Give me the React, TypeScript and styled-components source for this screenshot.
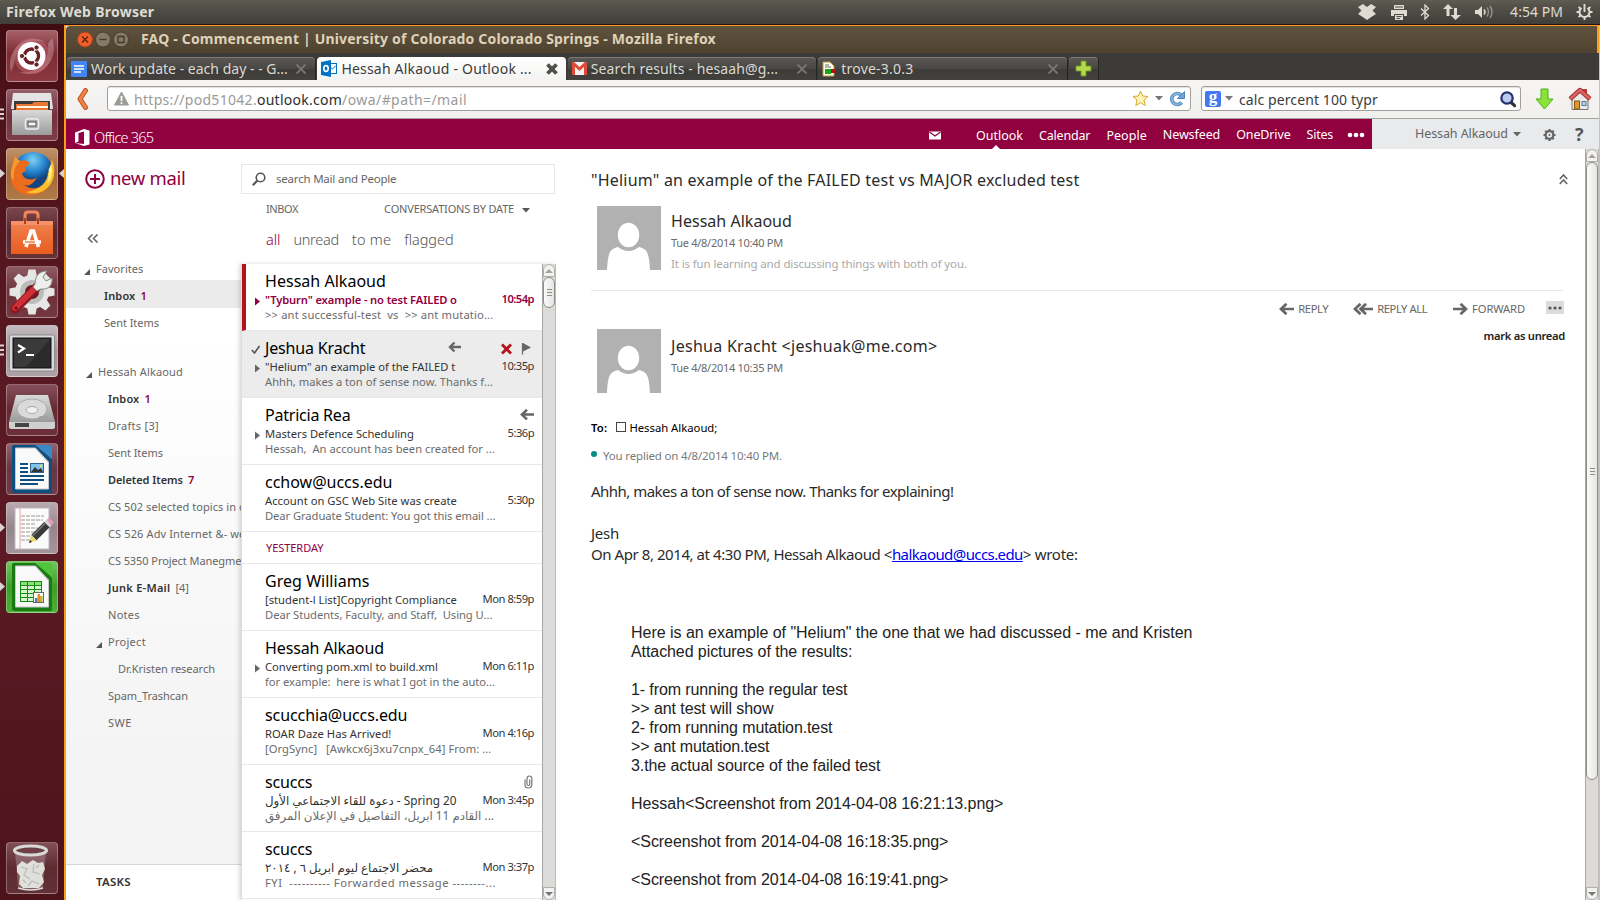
import React, { useLayoutEffect, useRef, useState } from 'react';
import styled, { createGlobalStyle, css } from 'styled-components';

const MAROON = '#91003f';
const UI = `"Noto Sans", "Open Sans", "DejaVu Sans", sans-serif`;

const Global = createGlobalStyle`
  * { box-sizing: border-box; }
  body { margin: 0; width: 1600px; height: 900px; overflow: hidden; font-family: ${UI}; background: #fff; }
  svg { display: block; flex: none; }
`;

/* Text tracked so that it occupies a given width. */
function Fit({ w, children, className }: { w?: number; children: string; className?: string }) {
  const ref = useRef<HTMLSpanElement>(null);
  const [ls, setLs] = useState(0);
  useLayoutEffect(() => {
    if (!w || !ref.current) return;
    const natural = ref.current.getBoundingClientRect().width - ls * children.length;
    setLs((w + 0.4 - natural) / children.length);
  }, [w, children]);
  return <span ref={ref} className={className} style={{ letterSpacing: `${ls}px` }}>{children}</span>;
}
const Text = styled(Fit)`display: inline-block; flex: none; white-space: pre;`;

const Desktop = styled.div`width: 1600px; height: 900px; display: flex; flex-direction: column; overflow: hidden; background: #2e0a1c;`;

/* ---------- top panel ---------- */
const TopPanel = styled.header`
  height: 24px; flex: none; display: flex; align-items: center; padding: 0 7px 0 6px;
  background: linear-gradient(#5f5d53, #55534b 20%, #3f3e39); color: #dfdbd2;
`;
const PanelTitle = styled(Text)`font-size: 14px; font-weight: 700; line-height: 24px; margin-right: auto;`;
const Indicators = styled.div`display: flex; align-items: center; svg { fill: #dfdbd2; }`;
const Clock = styled(Text)`font-size: 14px; line-height: 24px; margin: 0 13px 0 15px;`;

const Body = styled.div`display: flex; height: 876px;`;

/* ---------- launcher ---------- */
const Launcher = styled.nav`
  width: 64px; flex: none; display: flex; flex-direction: column; gap: 7px; padding: 6px 6px;
  background: linear-gradient(#3f0c11, #4d1219 8%, #581822 35%, #5b1a24 60%, #4c131b);
`;
const Tile = styled.div<{ $bg: string; $last?: boolean }>`
  position: relative; width: 52px; height: 52px; flex: none; border-radius: 4px;
  background: ${p => p.$bg}; border: 1px solid rgba(255,255,255,.28);
  ${p => p.$last && css`margin-top: auto;`}
  & > svg { margin: -1px; }
`;
const Pips = styled.svg`position: absolute; left: -6px; top: 18px;`;
const Focus = styled.svg`position: absolute; right: -6px; top: 19px;`;

/* ---------- window ---------- */
const Window = styled.main`
  width: 1536px; margin-top: 1px; border-left: 2px solid #f9a01b; border-top: 1px solid #f9a01b; border-right: 1px solid #f6bd58;
  display: flex; flex-direction: column; background: #fff;
`;
const TitleBar = styled.div`
  height: 27px; flex: none; display: flex; align-items: center; background: linear-gradient(#5f523e, #4f432f);
  padding-left: 11px; border-radius: 4px 0 0 0;
`;
const WinTitle = styled(Text)`font-size: 14px; font-weight: 700; color: #dfd2b9; line-height: 24px; margin: -1px 0 0 10px;`;
const TabStrip = styled.div`height: 27px; flex: none; background: #3c3b37; display: flex; align-items: flex-end; padding-left: 1px; gap: 2px;`;
const Tab = styled.div<{ $on?: boolean }>`
  width: 248.4px; height: 23px; display: flex; align-items: center; padding: 0 8px 0 4px; border-radius: 4px 4px 0 0;
  background: ${p => (p.$on ? 'linear-gradient(#fff,#f4f3f2)' : 'linear-gradient(#5a5955,#484743 50%,#3d3c38 55%,#42413d)')};
  color: ${p => (p.$on ? '#3c3c3c' : '#dcd9d2')};
  box-shadow: ${p => (p.$on ? 'none' : 'inset 0 1px #7a7975, 1px 0 #252420')};
`;
const TabText = styled(Text)`font-size: 14px; line-height: 20px; margin: 0 auto 0 4px;`;
const AddTab = styled(Tab)`width: 29px; padding: 0 6px;`;
const Toolbar = styled.div`
  height: 39px; flex: none; display: flex; align-items: center; padding: 0 8px 1px 11px;
  background: linear-gradient(#f6f5f4, #f1f0ef); border-bottom: 1px solid #a7a5a2;
`;
const Field = styled.div<{ $w: number }>`
  width: ${p => p.$w}px; height: 25px; flex: none; display: flex; align-items: center; padding: 0 4px 0 6px;
  background: #fff; border: 1px solid #a19f9b; border-radius: 3px; box-shadow: inset 0 1px #e4e3e1;
`;
const Url = styled(Text)<{ $dark?: boolean }>`font-size: 14px; margin-top: 2px; color: ${p => (p.$dark ? '#2d2d2d' : '#9a9a98')};`;
const Push = styled.span<{ $w?: number }>`${p => (p.$w ? `width:${p.$w}px;flex:none` : 'flex:1')};`;
const Query = styled(Text)`font-size: 14px; color: #3c3c3c; margin: 2px auto 0 6px;`;
const Google = styled.span`
  width: 16px; height: 16px; margin-left: -3px; background: #4179f2; border-radius: 2px; color: #fff; text-align: center;
  font: 700 17px/11px "Liberation Serif", serif;
`;

/* ---------- Office suite bar ---------- */
const SuiteBar = styled.div`height: 30px; flex: none; display: flex; background: #e9eaec;`;
const Brand = styled.div`width: 1306px; height: 30px; background: ${MAROON}; color: #fff; display: flex; padding: 0 7px 0 9px;`;
const Product = styled(Text)`font-size: 14.5px; font-weight: 300; line-height: 30px; margin: 3px 0 0 4px;`;
const AppLink = styled(Text)<{ $up?: boolean }>`
  font-size: 12.5px; line-height: 28px; margin: ${p => (p.$up ? 2 : 3)}px 0 0 16px; height: 27px;
`;
const AppLinkCurrent = styled(Text)`font-size: 12.5px; line-height: 28px; height: 28px;`;
const Current = styled.div`
  display: flex; flex-direction: column; align-items: center; margin-left: 18px; height: 30px; padding-top: 3px;
  svg { margin: -5px 8px 0 0; }
`;
const Account = styled.div`flex: 1; display: flex; align-items: flex-start; padding: 0 11px 0 43px; color: #666;`;
const AccountName = styled(Text)`font-size: 12.5px; line-height: 26px; margin-top: 2px;`;
const Help = styled(Text)`font: 700 18px/30px "Open Sans", sans-serif; color: #555; margin: 0 0 0 19px;`;

const Content = styled.div`display: flex; height: 751px;`;

/* ---------- folders ---------- */
const Folders = styled.aside`
  width: 175px; flex: none; height: 751px; display: flex; flex-direction: column; overflow: hidden;
  background: linear-gradient(#fff 25%, #f3f3f3 85%);
`;
const NewMail = styled.div`display: flex; align-items: center; height: 30px; margin: 15px 0 0 19px; color: ${MAROON};`;
const NewMailText = styled(Text)`font-size: 18.5px; line-height: 30px; margin: -3px 0 0 5px;`;
const Collapse = styled.div`height: 61px; flex: none; padding: 40px 0 0 21px;`;
const Gap = styled.div`height: 22px; flex: none;`;
const Folder = styled.div<{ $x: number; $on?: boolean; $strong?: boolean }>`
  height: ${p => (p.$on ? 28 : 27)}px; flex: none; display: flex; align-items: center; white-space: nowrap;
  padding: ${p => (p.$on ? 2 : 0)}px 0 0 ${p => p.$x}px; font-size: 11px; color: #666;
  ${p => p.$on && css`background: #ebebeb; margin: -2px 0 1px;`}
  ${p => p.$strong && css`& > span:first-of-type { font-weight: 600; color: #333; }`}
  svg { margin: 7px 6px 0 0; }
`;
const Count = styled.span<{ $hot?: boolean }>`margin-left: 5px; ${p => p.$hot && css`color: ${MAROON}; font-weight: 600;`}`;
const Tasks = styled.div`
  height: 36px; margin-top: auto; border-top: 1px solid #d6d6d6; background: #fff; padding: 6px 0 0 30px;
  font-size: 11.5px; font-weight: 600; color: #333; line-height: 22px;
`;

/* ---------- message list ---------- */
const ListPane = styled.section`width: 314px; flex: none; height: 751px; display: flex; flex-direction: column; padding-top: 15px;`;
const Search = styled.div`height: 30px; border: 1px solid #e6e6e6; display: flex; align-items: center; padding-left: 10px; flex: none;`;
const SearchText = styled(Text)`font-size: 11.5px; color: #666; margin: -1px 0 0 10px;`;
const ListHead = styled.div`
  height: 20px; margin-top: 4px; padding: 0 25px 0 25px; display: flex; align-items: center; font-size: 11px; color: #666; flex: none;
  svg { margin-top: 5px; }
`;
const Filters = styled.div`height: 24px; margin-top: 10px; padding-left: 25px; display: flex; gap: 13px; font-size: 14.5px; line-height: 22px; flex: none;`;
const Filter = styled(Text)<{ $on?: boolean }>`color: ${p => (p.$on ? MAROON : '#555')}; font-weight: 300;`;
const ListBody = styled.div`display: flex; margin-top: 12px; height: 636px; box-shadow: -2px 0 4px rgba(0,0,0,.14);`;
const Items = styled.div`width: 301px; flex: none; height: 636px; overflow: hidden; background: #fff; border-left: 1px solid #dcdcdc;`;
const Item = styled.article<{ $sel?: boolean; $unread?: boolean }>`
  height: 67px; border-bottom: 1px solid #e8e8e8; padding: 6px 8px 0 0; display: grid; align-content: start;
  grid-template-columns: 23px 192px 77px; grid-template-rows: 21px 16px 15px; justify-items: start;
  background: ${p => (p.$sel ? '#ececec' : '#fff')};
  ${p => p.$unread && css`border-left: 4px solid #b5121b; grid-template-columns: 19px 192px 77px;`}
`;
const Sender = styled(Text)`font-size: 16px; line-height: 22px; color: #000;`;
const Subject = styled(Text)<{ $unread?: boolean }>`
  font-size: 11.2px; line-height: 17px; color: #333;
  ${p => p.$unread && css`color: ${MAROON}; font-weight: 600;`}
`;
const Preview = styled(Text)`font-size: 11.2px; line-height: 15px; color: #6b6b6b; grid-column: 2 / 4;`;
const Time = styled(Subject)`justify-self: end; margin-top: -1px;`;
const Gutter = styled.div`width: 100%; display: flex; justify-content: flex-end; align-items: center; padding: 4px 5px 0 0;`;
const Flags = styled.div`width: 77px; display: flex; justify-content: flex-end; align-items: center;`;
const Day = styled.div`height: 32px; border-bottom: 1px solid #e8e8e8; padding-left: 24px; font-size: 11px; line-height: 31px; color: ${MAROON};`;

/* ---------- scroll bars ---------- */
const Bar = styled.div`
  width: 14px; flex: none; height: 100%; display: flex; flex-direction: column; background: #dcdbd9;
  border-left: 1px solid #a9a7a4; border-right: 1px solid #bdbbb8;
`;
const Cap = styled.div<{ $down?: boolean }>`
  height: 13px; flex: none; display: flex; align-items: center; justify-content: center; background: #f3f2f1; border: 1px solid #b0aeab;
  border-radius: ${p => (p.$down ? '0 0 7px 7px' : '7px 7px 0 0')};
`;
const Thumb = styled.div<{ $h: number }>`
  height: ${p => p.$h}px; flex: none; border: 1px solid #8f8d8a; border-radius: 7px; background: linear-gradient(90deg, #fafafa, #e6e5e3);
  display: flex; flex-direction: column; justify-content: center; align-items: center; gap: 2px;
`;
const Grip = styled.i`width: 5px; height: 1px; background: #8f8d8a;`;

function Scroll({ h }: { h: number }) {
  return (
    <Bar>
      <Cap><svg width="8" height="4"><path d="M0 4L4 0L8 4z" fill="#a5a3a0" /></svg></Cap>
      <Thumb $h={h}><Grip /><Grip /><Grip /></Thumb>
      <Push />
      <Cap $down><svg width="8" height="4"><path d="M0 0L4 4L8 0z" fill="#777" /></svg></Cap>
    </Bar>
  );
}

/* ---------- reading pane ---------- */
const Reader = styled.section`flex: 1; height: 751px; padding: 16px 20px 0 36px; overflow: hidden; color: #2b2b2b;`;
const Row = styled.div<{ $mt?: number; $h?: number }>`display: flex; align-items: flex-start; margin-top: ${p => p.$mt || 0}px; ${p => p.$h && `height:${p.$h}px;`}`;
const CollapseAll = styled.svg`margin-right: -3px;`;
const Headline = styled(Text)`font-size: 16px; line-height: 30px;`;
const Who = styled.div<{ $mt: number }>`margin: ${p => p.$mt}px auto 0 10px; display: flex; flex-direction: column; align-items: flex-start;`;
const Name = styled(Text)`font-size: 16px; line-height: 22px;`;
const When = styled(Text)<{ $pale?: boolean }>`font-size: ${p => (p.$pale ? 11.5 : 11)}px; line-height: 20px; margin-top: 1px; color: ${p => (p.$pale ? '#a9a9a9' : '#6a6a6a')};`;
const Rule = styled.hr`border: 0; height: 1px; background: #e6e6e6; margin: 20px 2px 0 0;`;
const Actions = styled.div`display: flex; justify-content: flex-end; align-items: center; margin-top: 8px; height: 20px; color: #666; padding-right: 1px;`;
const Action = styled(Text)<{ $gap: number }>`font-size: 11.2px; margin: -1px ${p => p.$gap}px 0 4px;`;
const More = styled.div`width: 18px; height: 13px; background: #dcdcdc; display: flex; align-items: center; justify-content: center; margin-top: -3px;`;
const MarkUnread = styled(Text)`font-size: 11.2px; font-weight: 600; line-height: 20px; color: #222;`;
const Lower = styled.div`margin-top: 3px;`;
const To = styled.div`display: flex; align-items: center; height: 20px; margin-top: 24px; font-size: 11.3px; color: #000; b { font-weight: 600; }`;
const Box = styled.i`width: 10px; height: 10px; border: 1px solid #444; margin: 0 3px 0 9px;`;
const Replied = styled.div`display: flex; align-items: center; height: 20px; margin-top: 8px; font-size: 11.5px; color: #7a7a7a;`;
const Dot = styled.i`width: 6px; height: 6px; border-radius: 3px; background: #008f85; margin: -2px 6px 0 0;`;
const Message = styled.div`margin-top: 16px; font-size: 15px; line-height: 21px;`;
const Line = styled.div`height: 21px; display: flex;`;
const Link = styled(Text)`text-decoration: underline; color: #00e;`;
const Quote = styled.div`margin: 58px 0 0 40px; font: 16px/19px "Liberation Sans", Arial, sans-serif; color: #222;`;
const QLine = styled.div`height: 19px;`;

/* ---------- small drawings ---------- */
const Caret = ({ c = '#666' }: { c?: string }) => <svg width="8" height="5"><path d="M0 0H8L4 4.5z" fill={c} /></svg>;
const Tri = () => <svg width="6" height="6"><path d="M6 0V6H0z" fill="#555" /></svg>;
const Arrow = ({ w = 14, flip }: { w?: number; flip?: boolean }) => (
  <svg width={w} height={w * 0.8} viewBox="0 0 15 12" fill="none" stroke="#666" strokeWidth="2.7"
    transform={flip ? 'scale(-1 1)' : undefined}><path d="M2 6H15M7.500 .8L2 6L7.500 11.200" /></svg>
);
const ArrowAll = () => (
  <svg width="20" height="12" viewBox="0 0 20 12" fill="none" stroke="#666" strokeWidth="2.7"><path d="M7 6H20M7.500 .8L2 6L7.500 11.200M13 .8L7.500 6L13 11.200" /></svg>
);
const Expand = ({ c = '#666' }: { c?: string }) => <svg width="5" height="9"><path d="M0 .5L5 4.5L0 8.500z" fill={c} /></svg>;
const Close = ({ on }: { on?: boolean }) => (
  <svg width="12" height="12" viewBox="0 0 12 12"><path d="M1.500 1.500L10.500 10.500M10.500 1.500L1.500 10.500" stroke={on ? '#4f4e4a' : '#777571'} strokeWidth={on ? 3.8 : 1.8} /></svg>
);
const Avatar = () => (
  <svg width="64" height="64">
    <rect width="64" height="64" fill="#b1b1b1" />
    <path d="M10 64C11 48 12 43 21 41Q31.500 49 42 41C51 43 52 48 53 64z" fill="#fff" />
    <ellipse cx="31.500" cy="29" rx="11.500" ry="13" fill="#fff" stroke="#b1b1b1" strokeWidth="1.500" />
  </svg>
);
const WinButton = ({ kind }: { kind: 'x' | '-' | 'o' }) => (
  <svg width="18" height="18" viewBox="0 0 18 18">
    <circle cx="8" cy="8.500" r="7.500" fill={kind === 'x' ? '#ee5f2c' : '#837a68'} stroke={kind === 'x' ? '#a8401a' : '#463d2c'} />
    <path fill="none" stroke={kind === 'x' ? '#5c1f0a' : '#3f3829'} strokeWidth="1.300"
      d={kind === 'x' ? 'M5 5.500L11 11.500M11 5.500L5 11.500' : kind === '-' ? 'M4.500 8.500H11.500' : 'M5 5.500H11V11.500H5z'} />
  </svg>
);

const Sheet = ({ a, b }: { a: string; b: string }) => (
  <>
    <path d="M8 2H32L46 17V48Q46 50 43 50H9Q6 50 6 47V4Q6 2 8 2z" fill={a} />
    <path d="M29 2H43Q46 2 46 5V16z" fill={b} />
    <path d="M9.500 5H29.500L42.500 19V46H9.500z" fill="#fafafa" stroke="#c9c9c9" />
    <path d="M29.500 5V6L42.500 20V19z" fill="#bbb" />
  </>
);

const icons: Record<string, React.ReactNode> = {
  dash: (
    <>
      <path d="M5 42C-1 18 22 2 40 12C26 8 10 14 8 34zM46 8C54 32 34 50 12 42C30 44 44 34 42 14z" fill="#fff" opacity=".25" />
      <circle cx="26" cy="26" r="18" fill="#c66b74" opacity=".45" />
      <circle cx="25.500" cy="26" r="14" fill="#fff" />
      <circle cx="25.500" cy="26" r="7" fill="none" stroke="#6b2027" strokeWidth="3.400" />
      <path d="M25.500 26L12 26M25.500 26L32 37.500M25.500 26L32 14.500" stroke="#fff" strokeWidth="1.300" />
      <circle cx="25.500" cy="26" r="5" fill="#fff" />
      <g fill="#6b2027" stroke="#fff" strokeWidth="1"><circle cx="16" cy="26" r="2.600" /><circle cx="30.500" cy="17.500" r="2.600" /><circle cx="30.500" cy="34.500" r="2.600" /></g>
    </>
  ),
  files: (
    <>
      <path d="M7 4H45L47 20H5z" fill="#e4e4e4" /><rect x="8" y="12" width="36" height="10" fill="#3b3b3b" />
      <path d="M10 15H26L28 13H42V24H10z" fill="#e97733" /><rect x="11" y="17" width="31" height="2" fill="#fff3e4" />
      <path d="M6 21H46V46H6z" fill="url(#gm)" /><rect x="19.500" y="30" width="13" height="10" rx="2" fill="#aaa" stroke="#eee" strokeWidth="1.500" />
      <rect x="22" y="33" width="8" height="4" fill="#f5f5f5" stroke="#555" />
    </>
  ),
  firefox: (
    <>
      <circle cx="27" cy="24" r="20" fill="url(#gb)" />
      <path d="M47 14C51 32 42 47 25 47C10 47 3 36 5 24C6 17 8 14 9 8C11 11 13 12 14 13C18 11 22 13 24 15L19 20C21 22 19 24 16 25C17 31 24 33 31 30C25 38 22 39 17 36C26 44 40 40 43 28C44 22 45 18 47 14z" fill="#ea6c1c" />
      <path d="M46 12C50 22 49 34 40 41C32 47 24 46 20 44C34 42 42 34 42 24L44 26C45 22 44 18 46 12z" fill="#fbc12d" />
      <path d="M45 16C47 24 46 30 41 36C43 30 43 26 42.500 22z" fill="#fff08a" />
      <path d="M5 24C6 17 8 14 9 8C11 11 13 12 14 13L11 17C8 20 7 26 8 33C5 30 4.500 27 5 24z" fill="#f79b2e" />
    </>
  ),
  software: (
    <>
      <path d="M19 14V8Q19 5 22 5H29Q32 5 32 8V14" fill="none" stroke="#f08a5b" strokeWidth="3" />
      <path d="M5 14H47V47H5z" fill="url(#go)" /><path d="M5 14H47V18H5z" fill="#f3916a" />
      <path d="M19 11V17M32 11V17" stroke="#a8431e" strokeWidth="2" />
      <path d="M20 40L25 24H27.500L32.500 40" fill="none" stroke="#fff" strokeWidth="3.600" /><path d="M17 35H35" stroke="#fff" strokeWidth="3.500" /><path d="M19 35H29" stroke="#ee6a31" strokeWidth="1.300" />
    </>
  ),
  settings: (
    <>
      <g fill="#e6e6e4"><circle cx="26" cy="26" r="17" />
        {[0, 45, 90, 135, 180, 225, 270, 315].map(a => <path key={a} d="M21 11L22.500 3.500H29.500L31 11z" transform={`rotate(${a} 26 26)`} />)}
      </g>
      <circle cx="26" cy="26" r="12" fill="#bcbcba" /><circle cx="26" cy="26" r="7" fill="#631b22" />
      <path d="M9 43L31 21" stroke="#8d1620" strokeWidth="9" strokeLinecap="round" /><path d="M9 42L30 21" stroke="#cf2f36" strokeWidth="6" strokeLinecap="round" />
      <path d="M29 18C29 10 33 5 41 5L37 11L40 15L46 12C47 20 41 24 35 23L31 25L27 21z" fill="#eee" stroke="#888" />
      <circle cx="10" cy="42" r="1.500" fill="#5b1016" />
    </>
  ),
  terminal: (
    <>
      <rect x="3.500" y="10" width="45" height="36" rx="2" fill="#dadada" stroke="#8d8d8d" /><rect x="7" y="13" width="38" height="30" fill="#2b2b2b" stroke="#111" />
      <path d="M8 14H44L20 42H8z" fill="#444" opacity=".6" />
      <path d="M12 20L18 23.500L12 27.500" fill="none" stroke="#fff" strokeWidth="2.200" /><path d="M20 30H28" stroke="#fff" strokeWidth="2" />
    </>
  ),
  disk: (
    <>
      <path d="M10 11H42L49 38H3z" fill="url(#gm)" /><path d="M3 38H49V43Q49 45 46 45H6Q3 45 3 43z" fill="#cfcfcf" />
      <rect x="9" y="39" width="14" height="4" fill="#444" /><ellipse cx="26" cy="25" rx="15" ry="10" fill="#dadada" stroke="#a9a9a9" />
      <ellipse cx="26" cy="26" rx="6" ry="3.500" fill="#efefef" stroke="#aaa" /><path d="M33 33L42 33" stroke="#999" />
    </>
  ),
  writer: (
    <>
      <Sheet a="#0d4f80" b="#3a88c4" />
      <path d="M14 21H22M14 25H22M14 29H22M14 33H38M14 37H38M14 41H32" stroke="#0d4f80" strokeWidth="1.800" />
      <rect x="24.500" y="20.500" width="13" height="9" fill="#7ec3ef" stroke="#36618a" /><path d="M25 29L29 24L32 27L35 25L37 29z" fill="#333" /><circle cx="35" cy="23" r="1.200" fill="#ffd83b" />
    </>
  ),
  gedit: (
    <>
      <rect x="9" y="6" width="34" height="41" fill="#fbfbfb" stroke="#bbb" /><path d="M14 6V47" stroke="#f3a3a3" />
      <path d="M15 14H38M15 18H37M15 22H30M15 26H32M15 30H29M15 34H27M15 38H24" stroke="#9a9a9a" strokeWidth="1.200" strokeDasharray="4 1" />
      <path d="M23 41L25 33L31 38.500z" fill="#ead873" /><path d="M23 41L24 38L26 40z" fill="#222" />
      <path d="M28 35.500L41 22.500" stroke="#3a3a3a" strokeWidth="7.500" /><path d="M26.500 34L39.500 21" stroke="#777" strokeWidth="1.500" />
      <path d="M41 22.500L43 20.500" stroke="#d5d5d5" strokeWidth="7.500" /><path d="M43 20.500L45.500 18" stroke="#e79abf" strokeWidth="7" />
    </>
  ),
  calc: (
    <>
      <Sheet a="#1a7a12" b="#4fc43c" />
      <rect x="14" y="20" width="22" height="21" fill="#178a12" />
      {[21, 25, 29, 33, 37].map(y => [15, 22, 29].map(x => <rect key={`${x}-${y}`} x={x} y={y} width="6" height="3" fill={y === 21 ? '#8be07c' : '#d8f5d2'} />))}
      <rect x="27.500" y="31.500" width="10" height="10" fill="#fff" stroke="#666" /><path d="M29 41V37H31.500V41z" fill="#3a7fc4" /><path d="M31.500 41V33H34V41z" fill="#f08a24" /><path d="M34 41V35H36.500V41z" fill="#c9b52d" />
    </>
  ),
  trash: (
    <>
      <path d="M9 9L12 46Q26 50 37 46L40 9z" fill="#fff" opacity=".22" />
      <ellipse cx="24.500" cy="8.500" rx="16" ry="4.500" fill="#6b3f44" stroke="#d9d9d6" strokeWidth="3" />
      <path d="M11 24L16 19L21 22L27 18L32 21L37 20L39 27L36 33L38 40L33 46H17L13 42L14 34L11 30z" fill="#dfdfdc" />
      <path d="M15 25L21 27L18 33L24 37M28 22L27 30L34 32M22 44L26 39L33 42M33 23L30 26M17 38L20 41" stroke="#bcbcb8" fill="none" strokeWidth="1.300" />
      <path d="M12 46Q25 50 37 46" stroke="#ddd" fill="none" strokeWidth="1.500" />
    </>
  ),
};

const launcher: [string, string, number][] = [
  ['dash', 'linear-gradient(#a56168,#7e2b33 45%,#8c3840)', 0],
  ['files', 'linear-gradient(#955e69,#73303c 50%,#7d3d49)', 3],
  ['firefox', 'linear-gradient(#bf9168,#a3683a 50%,#b07a48)', 1],
  ['software', 'linear-gradient(#7a474e,#5a252c 50%,#653238)', 0],
  ['settings', 'linear-gradient(#8d5a62,#6d3039 50%,#733841)', 0],
  ['terminal', 'linear-gradient(#c3bbbf,#9f9599 50%,#aca2a6)', 3],
  ['disk', 'linear-gradient(#85505a,#662831 50%,#6d313b)', 0],
  ['writer', 'linear-gradient(#8d6570,#693542 50%,#6f3c48)', 0],
  ['gedit', 'linear-gradient(#b9a8ad,#96868b 50%,#a3959a)', 1],
  ['calc', 'linear-gradient(#74c45c,#3ea02c 50%,#4bb037)', 1],
];

const Defs = () => (
  <svg width="0" height="0">
    <defs>
      <linearGradient id="gm" x2="0" y2="1"><stop stopColor="#d9d9d9" /><stop offset="1" stopColor="#9b9b9b" /></linearGradient>
      <linearGradient id="go" x2="0" y2="1"><stop stopColor="#f0824f" /><stop offset="1" stopColor="#ea5c1f" /></linearGradient>
      <radialGradient id="gb" cy=".2"><stop stopColor="#7fd0f5" /><stop offset=".6" stopColor="#2584cf" /><stop offset="1" stopColor="#12457f" /></radialGradient>
    </defs>
  </svg>
);

type Mail = { name: string; nw: number; sub: string; sw?: number; pre: string; pw?: number; t: string; tw: number; more?: boolean; unread?: boolean; sel?: boolean; icon?: 'reply' | 'clip' };
const today: Mail[] = [
  { name: 'Hessah Alkaoud', nw: 120.5, sub: '"Tyburn" example - no test FAILED o', sw: 191.5, pre: '>> ant successful-test  vs  >> ant mutatio...', pw: 228, t: '10:54p', tw: 32, more: true, unread: true },
  { name: 'Jeshua Kracht', nw: 100, sub: '"Helium" an example of the FAILED t', sw: 190, pre: 'Ahhh, makes a ton of sense now. Thanks f...', pw: 227.5, t: '10:35p', tw: 32, more: true, sel: true },
  { name: 'Patricia Rea', nw: 85, sub: 'Masters Defence Scheduling', sw: 148.5, pre: 'Hessah,  An account has been created for ...', pw: 229.5, t: '5:36p', tw: 26, more: true, icon: 'reply' },
  { name: 'cchow@uccs.edu', nw: 127, sub: 'Account on GSC Web Site was create', sw: 191.5, pre: 'Dear Graduate Student: You got this email ...', pw: 230, t: '5:30p', tw: 26 },
];
const yesterday: Mail[] = [
  { name: 'Greg Williams', nw: 104, sub: '[student-l List]Copyright Compliance', sw: 191.5, pre: 'Dear Students, Faculty, and Staff,  Using U...', pw: 227, t: 'Mon 8:59p', tw: 51 },
  { name: 'Hessah Alkaoud', nw: 118.5, sub: 'Converting pom.xml to build.xml', sw: 172.5, pre: 'for example:  here is what I got in the auto...', pw: 229.5, t: 'Mon 6:11p', tw: 51, more: true },
  { name: 'scucchia@uccs.edu', nw: 142, sub: 'ROAR Daze Has Arrived!', sw: 126, pre: '[OrgSync]   [Awkcx6j3xu7cnpx_64] From: ...', pw: 226, t: 'Mon 4:16p', tw: 51 },
  { name: 'scuccs', nw: 47, sub: 'دعوة للقاء الاجتماعي الأول - Spring 20', pre: 'القادم 11 ابريل، التفاصيل في الإعلان المرفق ...', t: 'Mon 3:45p', tw: 51, icon: 'clip' },
  { name: 'scuccs', nw: 47, sub: 'محضر الاجتماع ليوم ابريل ٦ , ٢٠١٤', pre: 'FYI  ---------- Forwarded message --------...', pw: 230.5, t: 'Mon 3:37p', tw: 51 },
];
const Arabic = styled(Subject)`font-size: 11.8px;`;
const ArabicPreview = styled(Preview)`font-size: 11.8px;`;

function MailItem({ m }: { m: Mail }) {
  const Sub = m.sw ? Subject : Arabic;
  const Pre = m.pw ? Preview : ArabicPreview;
  return (
    <Item $sel={m.sel} $unread={m.unread}>
      <Gutter>{m.sel && <svg width="9" height="9"><path d="M.8 5L3.500 8L8.500 1" fill="none" stroke="#555" strokeWidth="1.600" /></svg>}</Gutter>
      <Sender w={m.nw}>{m.name}</Sender>
      <Flags>
        {m.icon === 'reply' && <Arrow w={14} />}
        {m.icon === 'clip' && <svg width="11" height="14" viewBox="0 0 11 14"><path d="M2 4.500V10Q2 13 5.300 13T8.800 10V3.500Q8.800 1 6.400 1T4 3.500V9Q4 10.500 5.400 10.500T6.700 9V4.500" fill="none" stroke="#777" strokeWidth="1.200" /></svg>}
        {m.sel && (
          <svg width="86" height="14" viewBox="0 0 86 14">
            <g fill="none" stroke="#666" strokeWidth="2.400"><path d="M2 6H13M6.500 1.500L2 6L6.500 10.500" /></g>
            <path d="M54 3.500L63 12.500M63 3.500L54 12.500" stroke="#b5121b" strokeWidth="2.800" /><path d="M74.500 2V13.500" stroke="#666" strokeWidth="1.200" /><path d="M75 2L83 6.500L75 10.500z" fill="#666" />
          </svg>
        )}
      </Flags>
      <Gutter>{m.more && <Expand c={m.unread ? MAROON : '#666'} />}</Gutter>
      <Sub w={m.sw} $unread={m.unread}>{m.sub}</Sub>
      <Time w={m.tw} $unread={m.unread}>{m.t}</Time>
      <span />
      <Pre w={m.pw}>{m.pre}</Pre>
    </Item>
  );
}

export default function App() {
  return (
    <Desktop>
      <Global />
      <TopPanel>
        <PanelTitle w={148}>Firefox Web Browser</PanelTitle>
        <Indicators>
          <svg width="18" height="16" viewBox="0 0 18 16"><path d="M5 0L9 3L13 0L18 3L14.500 6.500L18 10L14 12.500L9 16L4 12.500L0 10L3.500 6.500L0 3z" /></svg>
          <Push $w={15} />
          <svg width="16" height="15" viewBox="0 0 16 15"><path d="M3 0H13V4H3zM0 5H16V11H13V9H3V11H0zM4 10H12V15H4z" /><path d="M5.500 11.500H10.500M5.500 13.500H9M4 2H12" stroke="#4b4a44" /></svg>
          <Push $w={13} />
          <svg width="10" height="16" viewBox="0 0 10 16"><path d="M1 4.500L8.500 11.500L5 15V1L8.500 4.500L1 11.500" fill="none" stroke="#dfdbd2" strokeWidth="1.300" /></svg>
          <Push $w={13} />
          <svg width="18" height="16" viewBox="0 0 18 16"><path d="M5 0L10 5H6.500V12H3.500V5H0zM12.500 16L7.500 11H11V4H14V11H18z" /></svg>
          <Push $w={14} />
          <svg width="20" height="14" viewBox="0 0 20 14"><path d="M0 5H3L7 1V13L3 9H0z" /><path d="M9 4.500Q11 7 9 9.500" fill="none" stroke="#dfdbd2" strokeWidth="1.500" /><path d="M12 2.500Q15 7 12 11.500M15 1Q19 7 15 13" fill="none" stroke="#96938b" strokeWidth="1.400" /></svg>
          <Clock w={52.5}>4:54 PM</Clock>
          <svg width="17" height="16" viewBox="0 0 16 16"><g fill="none" stroke="#dfdbd2"><path d="M5 4A5 5 0 1 0 11 4" strokeWidth="2" /><path d="M8 0V8M0 8H3M13 8H16M8 13V16M2 13L4 11.500M14 13L12 11.500M2 3L4 4.500M14 3L12 4.500" strokeWidth="1.900" /></g></svg>
        </Indicators>
      </TopPanel>
      <Body>
        <Launcher>
          {launcher.map(([name, bg, pips]) => (
            <Tile key={name} $bg={bg}>
              <svg width="52" height="52">{icons[name]}</svg>
              {pips > 0 && (
                <Pips width="6" height="14">
                  {pips === 1 ? <path d="M0 3L5 7.500L0 12z" fill="#d9d4d2" /> : <path d="M0 2.500H4M0 7H4M0 11.500H4" stroke="#d9d4d2" strokeWidth="2.200" />}
                </Pips>
              )}
              {name === 'firefox' && <Focus width="6" height="12"><path d="M6 2L1 6.500L6 11z" fill="#d9d4d2" /></Focus>}
            </Tile>
          ))}
          <Tile $bg="linear-gradient(#7f5056,#5d2a30 50%,#623137)" $last><svg width="52" height="52">{icons.trash}</svg></Tile>
        </Launcher>
        <Window>
          <TitleBar>
            <WinButton kind="x" /><WinButton kind="-" /><WinButton kind="o" />
            <WinTitle w={574.5}>FAQ - Commencement | University of Colorado Colorado Springs - Mozilla Firefox</WinTitle>
            <Push /><svg width="2" height="27"><rect width="2" height="27" fill="#f9a01b" /></svg>
          </TitleBar>
          <TabStrip>
            <Tab>
              <svg width="16" height="16"><rect width="16" height="16" rx="1" fill="#4285f4" /><path d="M3 5H13M3 8H13M3 11H10" stroke="#fff" strokeWidth="1.400" /></svg>
              <TabText w={196.500}>Work update - each day - - G...</TabText><Close />
            </Tab>
            <Tab $on>
              <svg width="16" height="17"><rect x="7.500" y="3.500" width="8" height="10" fill="#fff" stroke="#0072c6" /><path d="M8 6L11.500 9L15 5.500" fill="none" stroke="#0072c6" /><path d="M0 2L10 0V17L0 15z" fill="#0072c6" /><ellipse cx="5" cy="8.500" rx="2.200" ry="2.900" fill="none" stroke="#fff" strokeWidth="1.600" /></svg>
              <TabText w={190}>Hessah Alkaoud - Outlook ...</TabText><Close on />
            </Tab>
            <Tab>
              <svg width="15" height="13"><rect width="15" height="13" rx="1" fill="#f3f1ee" /><path d="M1.500 13V1.500L7.500 7L13.500 1.500V13" fill="none" stroke="#dd4b39" strokeWidth="3" /></svg>
              <TabText w={187}>Search results - hesaah@g...</TabText><Close />
            </Tab>
            <Tab>
              <svg width="15" height="16"><path d="M1 1H8L12 5V15H1z" fill="#fffef0" stroke="#b8963a" /><path d="M3 4H7M3 6H9" stroke="#666" /><rect x="3" y="8" width="6" height="5" fill="#17a81a" /><rect x="9" y="8" width="5" height="4" fill="#b3120d" /></svg>
              <TabText w={72}>trove-3.0.3</TabText><Close />
            </Tab>
            <AddTab><svg width="17" height="17"><path d="M6 1H11V6H16V11H11V16H6V11H1V6H6z" fill="#b4d94a" stroke="#6d9420" /></svg></AddTab>
          </TabStrip>
          <Toolbar>
            <svg width="12" height="22"><path d="M8.500 2.500L3 11L8.500 19.500" fill="none" stroke="#c2501f" strokeWidth="5" strokeLinecap="round" strokeLinejoin="round" /><path d="M8.500 2.500L3 11L8.500 19.500" fill="none" stroke="#f08346" strokeWidth="3" strokeLinecap="round" strokeLinejoin="round" /></svg>
            <Push $w={18} />
            <Field $w={1084}>
              <svg width="15" height="15"><path d="M7.500 1L14.500 14H.5z" fill="#9c9b98" stroke="#9c9b98" strokeLinejoin="round" /><path d="M7.500 5V10M7.500 11.300V13" stroke="#fff" strokeWidth="1.800" /></svg>
              <Push $w={5} /><Url w={122.6}>https://pod51042.</Url><Url w={84.6} $dark>outlook.com</Url><Url w={124.6}>/owa/#path=/mail</Url>
              <Push />
              <svg width="17" height="17"><path d="M8.500 1L10.700 6L16 6.500L12 10L13.200 15.500L8.500 12.700L3.800 15.500L5 10L1 6.500L6.300 6z" fill="#fdf3b8" stroke="#d3aa2c" strokeLinejoin="round" /></svg>
              <Push $w={6} /><Caret c="#777" /><Push $w={6} />
              <svg width="17" height="16"><path d="M12.500 11.500A5.500 5.500 0 1 1 12 4" fill="none" stroke="#4c86bd" strokeWidth="3.600" /><path d="M12.500 11.500A5.500 5.500 0 1 1 12 4" fill="none" stroke="#86b6e0" strokeWidth="1.800" /><path d="M15.500 .5V7.500H8.500z" fill="#6fa5d6" stroke="#4c86bd" /></svg>
            </Field>
            <Push $w={10} />
            <Field $w={320}>
              <Google>g</Google><Push $w={4} /><Caret c="#777" />
              <Query w={138.500}>calc percent 100 typr</Query>
              <svg width="17" height="18" viewBox="0 0 18 18"><path d="M12 12L16.500 16" stroke="#333" strokeWidth="3.500" strokeLinecap="round" /><circle cx="8.500" cy="8" r="6" fill="#b9cbee" stroke="#27316f" strokeWidth="2.400" /></svg>
            </Field>
            <Push $w={14} />
            <svg width="19" height="22"><path d="M6 1H13V11H18L9.500 21L1 11H6z" fill="#8be33a" stroke="#4fae13" strokeLinejoin="round" /></svg>
            <Push $w={14} />
            <svg width="24" height="24"><rect x="15" y="2" width="4" height="8" fill="#bf3b3b" /><path d="M4 11V22.500H20V11L12 4z" fill="#e9e9e9" stroke="#777" /><rect x="6.500" y="14" width="5" height="8" fill="#e0972f" stroke="#8a5410" /><rect x="14" y="14.500" width="4" height="4" fill="#bcd3e6" stroke="#5d7b91" /><path d="M2 12L12 3L22 12" fill="none" stroke="#a32e2e" strokeWidth="4.500" strokeLinejoin="round" /><path d="M2 12L12 3L22 12" fill="none" stroke="#dc6464" strokeWidth="2.500" strokeLinejoin="round" /></svg>
          </Toolbar>
          <SuiteBar>
            <Brand>
              <svg width="15" height="30"><path d="M0 13.500L9 10L14.500 11.500V25.500L9 27L0 24L9 25V12.500L3.500 14V22.500L0 24z" fill="#fff" /></svg>
              <Product w={59}>Office 365</Product>
              <Push />
              <svg width="12" height="22"><path d="M0 12.500H12V20.500H0z" fill="#fff" /><path d="M.5 13L6 17L11.500 13" fill="none" stroke={MAROON} strokeWidth="1.300" /></svg>
              <Push $w={17} />
              <Current><AppLinkCurrent w={46.500}>Outlook</AppLinkCurrent><svg width="8" height="4"><path d="M0 4L4 0L8 4z" fill="#fff" /></svg></Current>
              <AppLink w={51}>Calendar</AppLink><AppLink w={40}>People</AppLink><AppLink w={57} $up>Newsfeed</AppLink><AppLink w={54} $up>OneDrive</AppLink><AppLink w={26} $up>Sites</AppLink>
              <Push $w={14} />
              <svg width="18" height="30"><g fill="#fff"><circle cx="3" cy="16" r="2.300" /><circle cx="9" cy="16" r="2.300" /><circle cx="15" cy="16" r="2.300" /></g></svg>
            </Brand>
            <Account>
              <AccountName w={92.500}>Hessah Alkaoud</AccountName><Push $w={5} />
              <svg width="8" height="20"><path d="M0 13H8L4 17.500z" fill="#666" /></svg><Push $w={22} />
              <svg width="13" height="24"><circle cx="6.500" cy="16" r="3.800" fill="none" stroke="#666" strokeWidth="2.200" />{[0, 45, 90, 135].map(a => <path key={a} d="M6.500 10V12M6.500 20V22" stroke="#666" strokeWidth="2.200" transform={`rotate(${a} 6.500 16)`} />)}<circle cx="6.500" cy="16" r="1" fill="#666" /></svg>
              <Help>?</Help>
            </Account>
          </SuiteBar>
          <Content>
            <Folders>
              <NewMail>
                <svg width="20" height="30"><circle cx="10" cy="15" r="8.800" fill="none" stroke={MAROON} strokeWidth="2" /><path d="M10 10V20M5 15H15" stroke={MAROON} strokeWidth="2" /></svg>
                <NewMailText w={75}>new mail</NewMailText>
              </NewMail>
              <Collapse><svg width="12" height="9"><path d="M5.500 .5L1.500 4.500L5.500 8.500M10.500 .5L6.500 4.500L10.500 8.500" fill="none" stroke="#666" strokeWidth="1.600" /></svg></Collapse>
              <Folder $x={18}><Tri /><Text w={47}>Favorites</Text></Folder>
              <Folder $x={38} $on $strong><Text w={31}>Inbox</Text><Count $hot>1</Count></Folder>
              <Folder $x={38}><Text w={54.500}>Sent Items</Text></Folder>
              <Gap />
              <Folder $x={20}><Tri /><Text w={84.500}>Hessah Alkaoud</Text></Folder>
              <Folder $x={42} $strong><Text w={31}>Inbox</Text><Count $hot>1</Count></Folder>
              <Folder $x={42}><Text w={50.500}>Drafts [3]</Text></Folder>
              <Folder $x={42}><Text w={54.500}>Sent Items</Text></Folder>
              <Folder $x={42} $strong><Text w={74.500}>Deleted Items</Text><Count $hot>7</Count></Folder>
              <Folder $x={42}><Text w={136}>CS 502 selected topics in c</Text></Folder>
              <Folder $x={42}><Text w={137}>CS 526 Adv Internet &amp;- we</Text></Folder>
              <Folder $x={42}><Text w={133}>CS 5350 Project Manegme</Text></Folder>
              <Folder $x={42} $strong><Text w={62}>Junk E-Mail</Text><Count>[4]</Count></Folder>
              <Folder $x={42}><Text w={31.500}>Notes</Text></Folder>
              <Folder $x={30}><Tri /><Text w={37.500}>Project</Text></Folder>
              <Folder $x={52}><Text w={96.500}>Dr.Kristen research</Text></Folder>
              <Folder $x={42}><Text w={79.500}>Spam_Trashcan</Text></Folder>
              <Folder $x={42}><Text w={23.500}>SWE</Text></Folder>
              <Tasks><Text w={34.500}>TASKS</Text></Tasks>
            </Folders>
            <ListPane>
              <Search>
                <svg width="14" height="14"><circle cx="8.500" cy="5.500" r="4.300" fill="none" stroke="#555" strokeWidth="1.600" /><path d="M5.500 8.500L.8 13.200" stroke="#555" strokeWidth="2.200" /></svg>
                <SearchText w={120}>search Mail and People</SearchText>
              </Search>
              <ListHead><Text w={31.500}>INBOX</Text><Push /><Text w={129.500}>CONVERSATIONS BY DATE</Text><Push $w={8} /><Caret c="#555" /></ListHead>
              <Filters><Filter w={14} $on>all</Filter><Filter w={45}>unread</Filter><Filter w={39}>to me</Filter><Filter w={49}>flagged</Filter></Filters>
              <ListBody>
                <Items>
                  {today.map((m, i) => <MailItem key={i} m={m} />)}
                  <Day><Text w={57}>YESTERDAY</Text></Day>
                  {yesterday.map((m, i) => <MailItem key={i} m={m} />)}
                </Items>
                <Scroll h={31} />
              </ListBody>
            </ListPane>
            <Reader>
              <Row $h={30}>
                <Headline w={488}>"Helium" an example of the FAILED test vs MAJOR excluded test</Headline><Push />
                <CollapseAll width="9" height="22"><path d="M.8 14L4.500 10L8.200 14M.8 19L4.500 15L8.200 19" fill="none" stroke="#666" strokeWidth="1.600" /></CollapseAll>
              </Row>
              <Row $mt={11} $h={64}><Push $w={6} /><Avatar />
                <Who $mt={4}><Name w={120.500}>Hessah Alkaoud</Name><When w={111.500}>Tue 4/8/2014 10:40 PM</When><When w={295.500} $pale>It is fun learning and discussing things with both of you.</When></Who>
              </Row>
              <Rule />
              <Actions>
                <Arrow w={15} /><Action w={29.500} $gap={25}>REPLY</Action>
                <ArrowAll /><Action w={49.500} $gap={26}>REPLY ALL</Action>
                <Arrow w={15} flip /><Action w={52.500} $gap={21}>FORWARD</Action>
                <More><svg width="14" height="4"><g fill="#555"><circle cx="2" cy="2" r="1.600" /><circle cx="7" cy="2" r="1.600" /><circle cx="12" cy="2" r="1.600" /></g></svg></More>
              </Actions>
              <Row $mt={7} $h={67}><Push $w={6} /><Lower><Avatar /></Lower>
                <Who $mt={9}><Name w={266}>{'Jeshua Kracht <jeshuak@me.com>'}</Name><When w={111.500}>Tue 4/8/2014 10:35 PM</When></Who>
                <MarkUnread w={81}>mark as unread</MarkUnread>
              </Row>
              <To><b><Text w={16}>To:</Text></b><Box /><Text w={87.500}>Hessah Alkaoud;</Text></To>
              <Replied><Dot /><Text w={178.500}>You replied on 4/8/2014 10:40 PM.</Text></Replied>
              <Message>
                <Line><Text w={362}>Ahhh, makes a ton of sense now. Thanks for explaining!</Text></Line>
                <Line />
                <Line><Text w={27.500}>Jesh</Text></Line>
                <Line><Text w={300.500}>{'On Apr 8, 2014, at 4:30 PM, Hessah Alkaoud <'}</Text><Link w={130.500}>halkaoud@uccs.edu</Link><Text w={54.500}>{'> wrote:'}</Text></Line>
              </Message>
              <Quote>
                <QLine><Text w={561}>Here is an example of "Helium" the one that we had discussed - me and Kristen</Text></QLine>
                <QLine><Text w={221}>Attached pictures of the results:</Text></QLine>
                <QLine />
                <QLine><Text w={216}>1- from running the regular test</Text></QLine>
                <QLine><Text w={142}>{'>> ant test will show'}</Text></QLine>
                <QLine><Text w={201}>2- from running mutation.test</Text></QLine>
                <QLine><Text w={138}>{'>> ant mutation.test'}</Text></QLine>
                <QLine><Text w={249}>3.the actual source of the failed test</Text></QLine>
                <QLine />
                <QLine><Text w={372}>{'Hessah<Screenshot from 2014-04-08 16:21:13.png>'}</Text></QLine>
                <QLine />
                <QLine><Text w={317}>{'<Screenshot from 2014-04-08 16:18:35.png>'}</Text></QLine>
                <QLine />
                <QLine><Text w={317}>{'<Screenshot from 2014-04-08 16:19:41.png>'}</Text></QLine>
              </Quote>
            </Reader>
            <Scroll h={618} />
          </Content>
        </Window>
      </Body>
      <Defs />
    </Desktop>
  );
}
